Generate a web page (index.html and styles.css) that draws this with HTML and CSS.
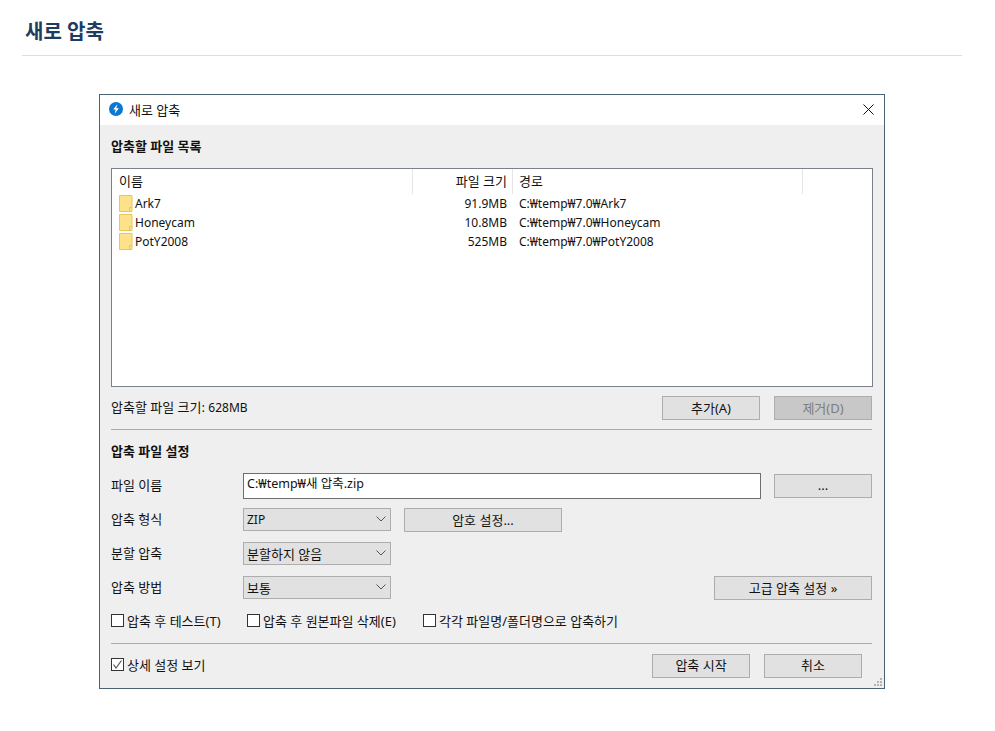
FILE: index.html
```html
<!DOCTYPE html>
<html lang="ko">
<head>
    <meta charset="UTF-8">
    <title>새로 압축</title>
    <link rel="stylesheet" href="styles.css">
</head>
<body>
    <h1 class="page-title">새로 압축</h1>

    <div class="window">
        <!-- 제목 표시줄 -->
        <div class="title-bar">
            <svg class="app-icon" width="14" height="14" viewBox="0 0 14 14">
                <circle cx="7" cy="7" r="7" fill="#0a78d2"/>
                <path d="M8.4 2.2 4.2 7.6h2.5L5.6 11.8 9.9 6.2H7.3z" fill="#fff"/>
            </svg>
            <span class="title-text">새로 압축</span>
            <svg class="close-icon" width="11" height="11" viewBox="0 0 11 11">
                <path d="M.5.5l10 10M10.5.5l-10 10" stroke="#111" fill="none"/>
            </svg>
        </div>

        <div class="window-body">
            <div class="section-title first">압축할 파일 목록</div>

            <!-- 파일 목록 -->
            <div class="file-list">
                <div class="list-header">
                    <div class="col-name">이름</div>
                    <div class="col-size">파일 크기</div>
                    <div class="col-path">경로</div>
                    <div class="col-rest"></div>
                </div>
                <div class="list-row">
                    <div class="col-name">
                        <svg class="folder" width="14" height="17" viewBox="0 0 14 17"><path d="M.5.5h12.5v16H.5z" fill="#fde28a" stroke="#eac65a"/><path d="M10.5 16.5v-4h2.5" fill="none" stroke="#eac65a"/></svg>
                        Ark7
                    </div>
                    <div class="col-size">91.9MB</div>
                    <div class="col-path">C:₩temp₩7.0₩Ark7</div>
                </div>
                <div class="list-row">
                    <div class="col-name">
                        <svg class="folder" width="14" height="17" viewBox="0 0 14 17"><path d="M.5.5h12.5v16H.5z" fill="#fde28a" stroke="#eac65a"/><path d="M10.5 16.5v-4h2.5" fill="none" stroke="#eac65a"/></svg>
                        Honeycam
                    </div>
                    <div class="col-size">10.8MB</div>
                    <div class="col-path">C:₩temp₩7.0₩Honeycam</div>
                </div>
                <div class="list-row">
                    <div class="col-name">
                        <svg class="folder" width="14" height="17" viewBox="0 0 14 17"><path d="M.5.5h12.5v16H.5z" fill="#fde28a" stroke="#eac65a"/><path d="M10.5 16.5v-4h2.5" fill="none" stroke="#eac65a"/></svg>
                        PotY2008
                    </div>
                    <div class="col-size">525MB</div>
                    <div class="col-path">C:₩temp₩7.0₩PotY2008</div>
                </div>
            </div>

            <div class="size-row">
                <span class="size-text">압축할 파일 크기: <span class="latin">628MB</span></span>
                <div class="btn-group">
                    <button class="btn">추가(A)</button>
                    <button class="btn disabled">제거(D)</button>
                </div>
            </div>

            <hr class="divider">

            <div class="section-title">압축 파일 설정</div>

            <!-- 압축 설정 -->
            <div class="form-row file-row">
                <label class="form-label">파일 이름</label>
                <input class="path-input" type="text" value="C:₩temp₩새 압축.zip">
                <button class="btn">...</button>
            </div>
            <div class="form-row">
                <label class="form-label">압축 형식</label>
                <div class="select"><span class="latin">ZIP</span><svg width="10" height="6" viewBox="0 0 10 6"><path d="M.5.5 5 5 9.500.5" fill="none" stroke="#555"/></svg></div>
                <button class="btn btn-password">암호 설정...</button>
            </div>
            <div class="form-row">
                <label class="form-label">분할 압축</label>
                <div class="select"><span>분할하지 않음</span><svg width="10" height="6" viewBox="0 0 10 6"><path d="M.5.5 5 5 9.500.5" fill="none" stroke="#555"/></svg></div>
            </div>
            <div class="form-row">
                <label class="form-label">압축 방법</label>
                <div class="select"><span>보통</span><svg width="10" height="6" viewBox="0 0 10 6"><path d="M.5.5 5 5 9.500.5" fill="none" stroke="#555"/></svg></div>
                <button class="btn btn-wide">고급 압축 설정 »</button>
            </div>

            <div class="check-row">
                <label class="check check-test"><span class="box"></span>압축 후 테스트(T)</label>
                <label class="check check-delete"><span class="box"></span>압축 후 원본파일 삭제(E)</label>
                <label class="check"><span class="box"></span>각각 파일명/폴더명으로 압축하기</label>
            </div>

            <hr class="divider">

            <div class="bottom-row">
                <label class="check">
                    <span class="box"><svg width="11" height="11" viewBox="0 0 11 11"><path d="M1.500 5.500 4 9 9.500 1.500" fill="none" stroke="#555" stroke-width="1.200"/></svg></span>
                    상세 설정 보기
                </label>
                <div class="btn-group">
                    <button class="btn">압축 시작</button>
                    <button class="btn">취소</button>
                </div>
            </div>
        </div>

        <svg class="grip" width="9" height="9" viewBox="0 0 9 9" fill="#b4b4b4">
            <rect x="7" y="1" width="2" height="2"/>
            <rect x="4" y="4" width="2" height="2"/><rect x="7" y="4" width="2" height="2"/>
            <rect x="1" y="7" width="2" height="2"/><rect x="4" y="7" width="2" height="2"/><rect x="7" y="7" width="2" height="2"/>
        </svg>
    </div>
</body>
</html>
```

FILE: styles.css
```css
* {
    box-sizing: border-box;
}
body {
    margin: 0;
    padding: 0 33px 0 22px;
    background-color: #fff;
    color: #111;
    font-family: "Noto Sans", "Noto Sans CJK KR", sans-serif;
    font-size: 13px;
}
.latin {
    font-size: 12px;
}
.page-title {
    height: 56px;
    margin: 0;
    padding: 18px 0 0 3px;
    border-bottom: 1px solid #ddd;
    color: #1c3c60;
    font-size: 20px;
    line-height: 28px;
    font-weight: 700;
}
.window {
    position: relative;
    width: 786px;
    height: 595px;
    margin: 38px 0 0 77px;
    border: 1px solid #4a6272;
    background-color: #efefef;
}
.title-bar {
    display: flex;
    align-items: center;
    height: 30px;
    padding: 0 10px 2px 9px;
    background-color: #fff;
}
.app-icon {
    margin-right: 6px;
}
.title-text {
    flex: 1;
}
.window-body {
    padding: 0 12px 0 11px;
}
.section-title {
    height: 20px;
    margin-top: 12px;
    line-height: 18px;
    font-weight: 700;
}
.section-title.first {
    margin-top: 12px;
    margin-bottom: 11px;
}
.file-list {
    width: 762px;
    height: 219px;
    border: 1px solid #7a8188;
    background-color: #fff;
}
.list-header, .list-row {
    display: grid;
    grid-template-columns: 301px 100px 290px 1fr;
}
.list-header {
    height: 25px;
    line-height: 25px;
}
.list-header > div {
    border-right: 1px solid #e5e5e5;
}
.list-header .col-rest {
    border-right: none;
}
.list-row {
    height: 19px;
    font-size: 12px;
    line-height: 19px;
}
.col-name {
    display: flex;
    align-items: center;
    gap: 2px;
    padding-left: 7px;
}
.col-size {
    padding-right: 5px;
    text-align: right;
}
.list-row .col-size {
    padding-right: 6px;
}
.col-path {
    padding-left: 6px;
}
.size-row {
    display: flex;
    justify-content: space-between;
    align-items: center;
    width: 761px;
    height: 24px;
    margin-top: 9px;
}
.size-text {
    margin-bottom: 4px;
}
.btn-group {
    display: flex;
    gap: 14px;
}
.btn {
    width: 98px;
    height: 24px;
    padding: 0 0 2px;
    border: 1px solid #adadad;
    background-color: #e1e1e1;
    color: #111;
    font: inherit;
}
.btn.disabled {
    background-color: #c8c8c8;
    color: #7d7d7d;
}
.divider {
    width: 761px;
    height: 1px;
    margin: 9px 0 0;
    border: none;
    background-color: #a9a9a9;
}
.form-row {
    display: flex;
    align-items: flex-start;
    height: 24px;
    margin-top: 10px;
}
.form-row.file-row {
    height: 26px;
    margin-top: 11px;
    align-items: center;
}
.file-row + .form-row {
    margin-top: 9px;
}
.form-label {
    width: 132px;
    line-height: 22px;
}
.file-row .form-label {
    margin-bottom: 3px;
}
.path-input {
    width: 518px;
    height: 26px;
    margin-right: 13px;
    padding: 0 3px 7px;
    border: 1px solid #6e6e6e;
    background-color: #fff;
    color: #111;
    font: inherit;
    font-size: 12.500px;
}
.select {
    display: flex;
    justify-content: space-between;
    align-items: center;
    width: 148px;
    height: 23px;
    padding: 0 4px 1px 3px;
    border: 1px solid #adadad;
    background-color: #e1e1e1;
}
.btn-password {
    width: 158px;
    margin-left: 13px;
}
.btn-wide {
    width: 158px;
    margin-left: 323px;
}
.check-row {
    display: flex;
    align-items: center;
    height: 20px;
    margin-top: 11px;
}
.check {
    display: flex;
    align-items: center;
    gap: 3px;
    margin-bottom: 2px;
}
.check-test {
    width: 136px;
}
.check-delete {
    width: 176px;
}
.box {
    display: flex;
    align-items: center;
    justify-content: center;
    width: 13px;
    height: 13px;
    border: 1px solid #333;
    background-color: #fff;
}
.check-row + .divider {
    margin-top: 12px;
}
.bottom-row {
    display: flex;
    justify-content: space-between;
    align-items: center;
    width: 751px;
    height: 24px;
    margin-top: 10px;
}
.bottom-row .check {
    margin-bottom: 3px;
}
.bottom-row .btn {
    padding-bottom: 4px;
}
.grip {
    position: absolute;
    right: 2px;
    bottom: 2px;
}
```
